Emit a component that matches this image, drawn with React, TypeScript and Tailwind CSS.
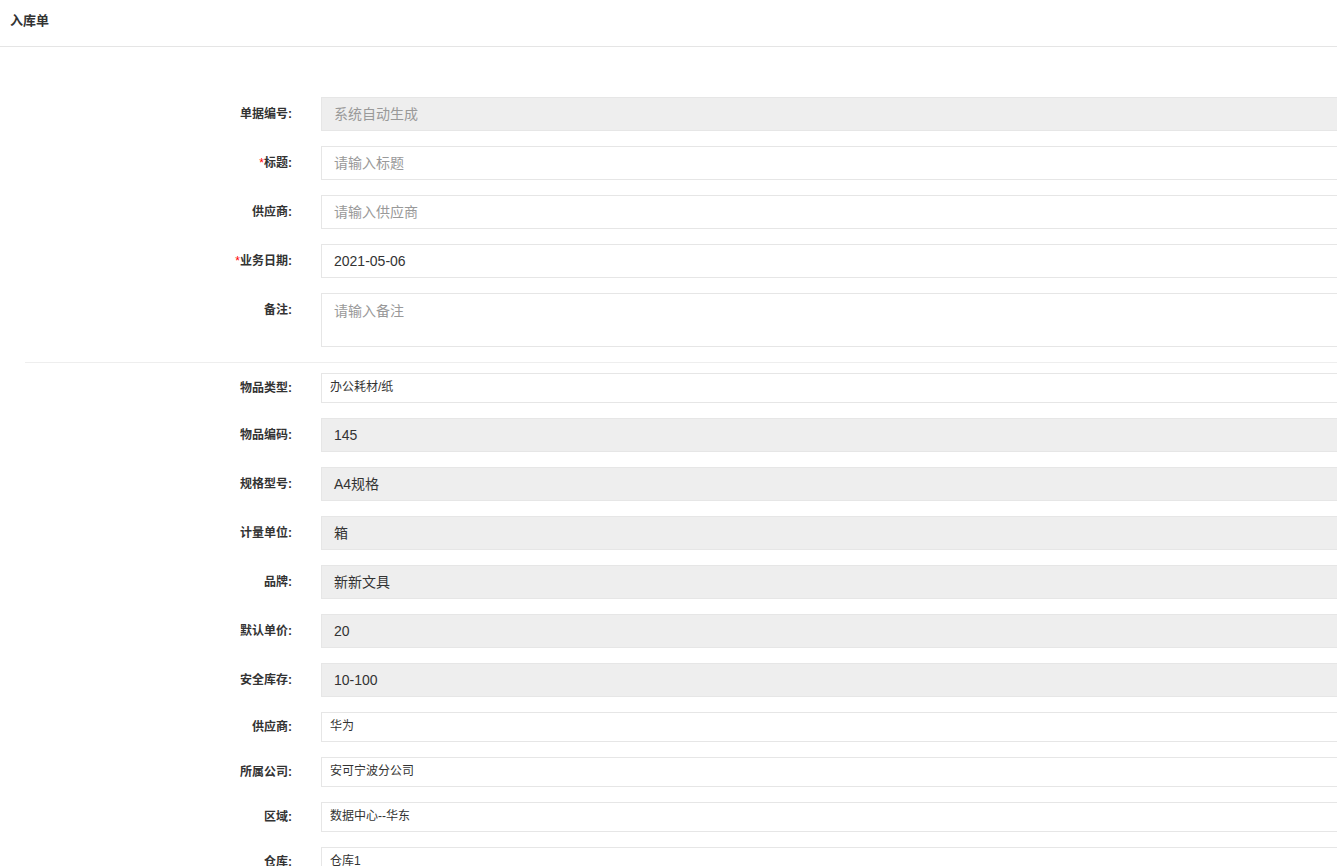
const font = { fontFamily: '"Liberation Sans", "Noto Sans CJK SC", sans-serif' };

type Row = {
  label: string;
  required?: boolean;
  value?: string;
  placeholder?: string;
  kind: "input" | "readonly" | "textarea" | "select";
};

const headRows: Row[] = [
  { label: "单据编号", placeholder: "系统自动生成", kind: "readonly" },
  { label: "标题", required: true, placeholder: "请输入标题", kind: "input" },
  { label: "供应商", placeholder: "请输入供应商", kind: "input" },
  { label: "业务日期", required: true, value: "2021-05-06", kind: "input" },
  { label: "备注", placeholder: "请输入备注", kind: "textarea" },
];

const itemRows: Row[] = [
  { label: "物品类型", value: "办公耗材/纸", kind: "select" },
  { label: "物品编码", value: "145", kind: "readonly" },
  { label: "规格型号", value: "A4规格", kind: "readonly" },
  { label: "计量单位", value: "箱", kind: "readonly" },
  { label: "品牌", value: "新新文具", kind: "readonly" },
  { label: "默认单价", value: "20", kind: "readonly" },
  { label: "安全库存", value: "10-100", kind: "readonly" },
  { label: "供应商", value: "华为", kind: "select" },
  { label: "所属公司", value: "安可宁波分公司", kind: "select" },
  { label: "区域", value: "数据中心--华东", kind: "select" },
  { label: "仓库", value: "仓库1", kind: "select" },
];

const FormRow = ({ row }: { row: Row }) => {
  const isArea = row.kind === "textarea";
  return (
    <div className={`flex ${isArea ? "items-start" : "items-center"} mb-[15px]`}>
      <label
        className={`w-[292px] shrink-0 text-right text-[12px] font-bold text-[#333] ${isArea ? "pt-[8px]" : ""}`}
      >
        {row.required && <span className="text-[#ff0000] font-normal">*</span>}
        {row.label}:
      </label>
      <div className="ml-[29px] shrink-0">
        {row.kind === "readonly" && (
          <div className="w-[1100px] h-[34px] px-[12px] flex items-center bg-[#eeeeee] border border-[#e6e6e6] text-[14px]">
            {row.value ? (
              <span className="text-[#333]">{row.value}</span>
            ) : (
              <span className="text-[#999]">{row.placeholder}</span>
            )}
          </div>
        )}
        {row.kind === "input" && (
          <div className="w-[1100px] h-[34px] px-[12px] flex items-center bg-white border border-[#e6e6e6] text-[14px]">
            {row.value ? (
              <span className="text-[#333]">{row.value}</span>
            ) : (
              <span className="text-[#999]">{row.placeholder}</span>
            )}
          </div>
        )}
        {row.kind === "textarea" && (
          <div className="w-[1100px] h-[54px] px-[12px] pt-[7px] bg-white border border-[#e6e6e6] text-[14px] text-[#999]">
            {row.placeholder}
          </div>
        )}
        {row.kind === "select" && (
          <div className="w-[1100px] h-[30px] px-[8px] pt-[4px] bg-white border border-[#e6e6e6] text-[12px] text-[#333]">
            {row.value}
          </div>
        )}
      </div>
    </div>
  );
};

export default function App() {
  return (
    <div className="w-full h-[866px] overflow-hidden bg-white" style={font}>
      <div className="h-[47px] px-[10px] flex items-center border-b border-[#e5e5e5]">
        <span className="text-[13px] font-bold text-[#333] -mt-[4px]">入库单</span>
      </div>
      <div className="pt-[50px]">
        {headRows.map((r) => (
          <FormRow key={r.label} row={r} />
        ))}
        <div className="ml-[25px] border-t border-[#eeeeee] mt-[1px] mb-[10px]" />
        {itemRows.map((r, i) => (
          <FormRow key={r.label + i} row={r} />
        ))}
      </div>
    </div>
  );
}
